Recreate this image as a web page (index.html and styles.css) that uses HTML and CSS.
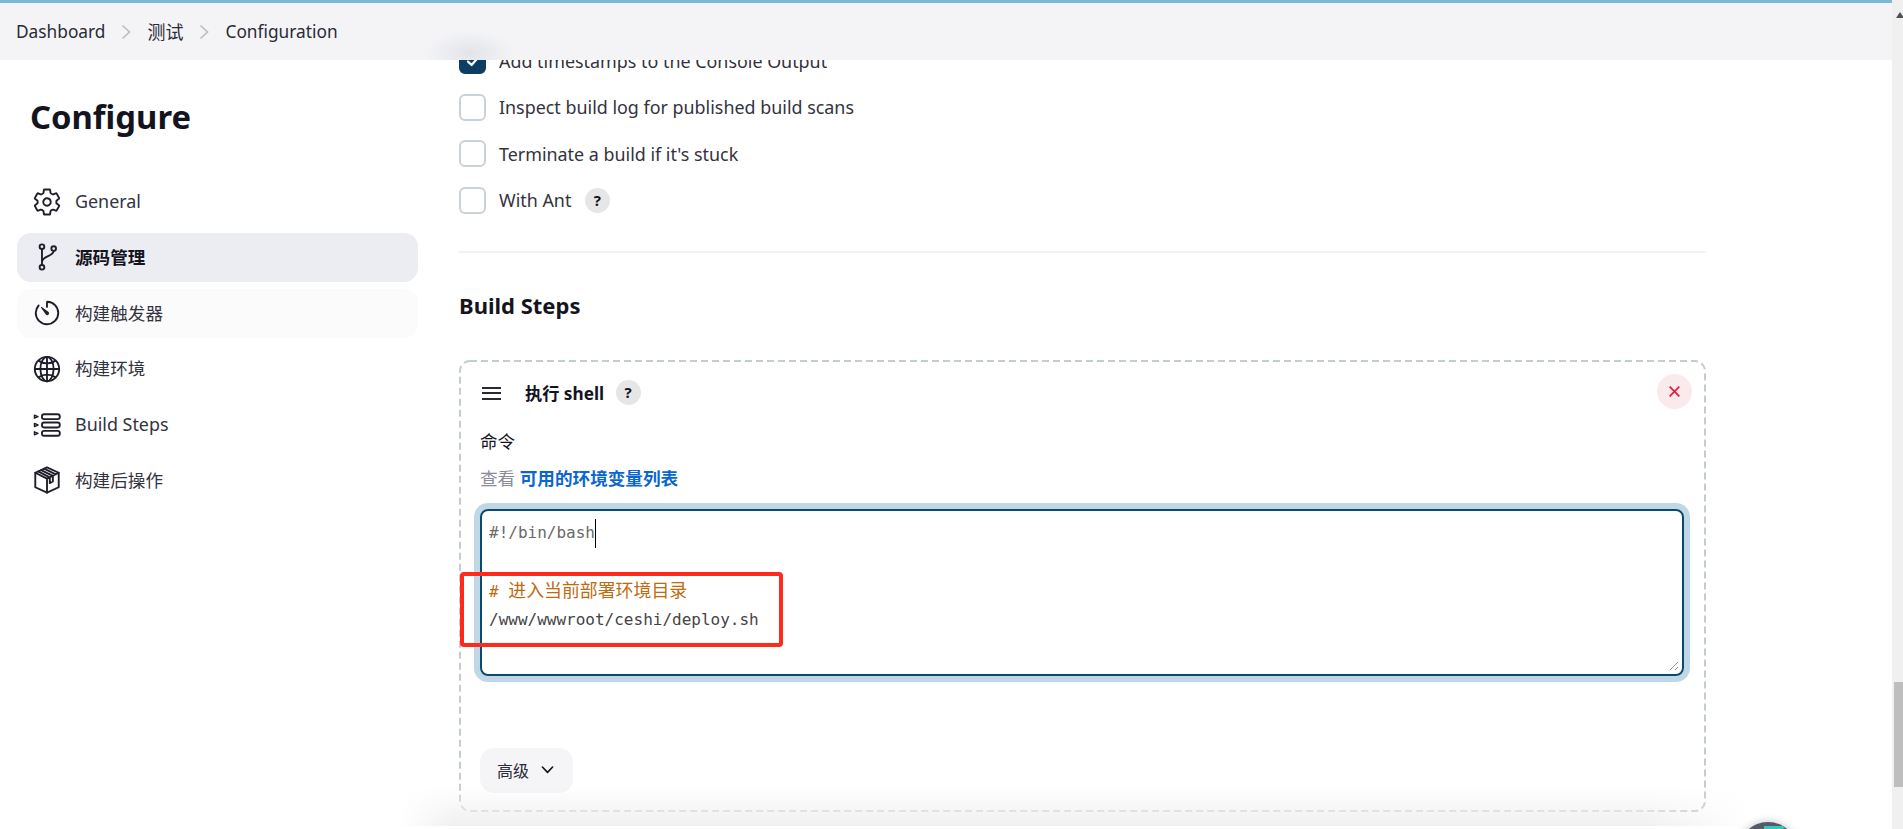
FILE: index.html
```html
<!DOCTYPE html>
<html lang="zh-CN">
<head>
<meta charset="utf-8">
<title>Configuration</title>
<link rel="stylesheet" href="styles.css">
</head>
<body>
<div class="app">
  <div class="page">
    <header class="topbar">
      <nav class="crumbs">
        <a class="crumb">Dashboard</a>
        <svg class="sep" viewBox="0 0 10 16"><path d="M1.5 1.5 8.5 8l-7 6.500"/></svg>
        <a class="crumb cjk">测试</a>
        <svg class="sep" viewBox="0 0 10 16"><path d="M1.5 1.5 8.500 8l-7 6.500"/></svg>
        <a class="crumb">Configuration</a>
      </nav>
    </header>

    <aside class="side">
      <h1 class="title">Configure</h1>
      <ul class="menu">
        <li class="item">
          <svg class="ico" viewBox="0 0 512 512"><path d="M262.29 192.31a64 64 0 1057.4 57.4 64.13 64.13 0 00-57.4-57.4zM416.39 256a154.34 154.34 0 01-1.53 20.79l45.21 35.46a10.81 10.81 0 012.45 13.75l-42.77 74a10.81 10.81 0 01-13.14 4.59l-44.9-18.08a16.11 16.11 0 00-15.17 1.75A164.48 164.48 0 01325 400.8a15.94 15.94 0 00-8.82 12.14l-6.73 47.89a11.08 11.08 0 01-10.68 9.17h-85.54a11.11 11.11 0 01-10.69-8.87l-6.72-47.82a16.07 16.07 0 00-9-12.22 155.3 155.3 0 01-21.46-12.57 16 16 0 00-15.11-1.71l-44.89 18.07a10.81 10.81 0 01-13.14-4.58l-42.77-74a10.8 10.8 0 012.45-13.75l38.21-30a16.05 16.05 0 006-14.08c-.36-4.17-.58-8.33-.58-12.5s.21-8.27.58-12.35a16 16 0 00-6.07-13.94l-38.19-30A10.81 10.81 0 0149.48 186l42.77-74a10.81 10.81 0 0113.14-4.59l44.9 18.08a16.11 16.11 0 0015.17-1.75A164.48 164.48 0 01187 111.2a15.94 15.94 0 008.82-12.14l6.73-47.89A11.08 11.08 0 01213.23 42h85.54a11.11 11.11 0 0110.69 8.87l6.72 47.82a16.07 16.07 0 009 12.22 155.3 155.3 0 0121.46 12.57 16 16 0 0015.11 1.71l44.89-18.07a10.81 10.81 0 0113.14 4.58l42.77 74a10.8 10.8 0 01-2.45 13.75l-38.21 30a16.05 16.05 0 00-6.05 14.08c.33 4.14.55 8.3.55 12.47z"/></svg>
          <span>General</span>
        </li>
        <li class="item active">
          <svg class="ico" viewBox="0 0 512 512"><circle cx="170" cy="80" r="40"/><circle cx="170" cy="432" r="40"/><circle cx="370" cy="112" r="40"/><path d="M170 120v272M370 152c0 90-200 90-200 190"/></svg>
          <span class="cjk">源码管理</span>
        </li>
        <li class="item hover">
          <svg class="ico" viewBox="0 0 512 512"><path d="M112.91 128A191.85 191.85 0 0064 254c-1.18 106.35 85.65 193.8 192 194 106.2.2 192-85.83 192-192 0-104.54-83.55-189.61-187.5-192a4.36 4.36 0 00-4.5 4.37V152"/><path class="solid" d="M233.38 278.63l-79-113a8.13 8.13 0 0111.32-11.32l113 79a32.5 32.5 0 01-37.25 53.26 33.21 33.21 0 01-8.07-8.94z"/></svg>
          <span class="cjk">构建触发器</span>
        </li>
        <li class="item">
          <svg class="ico" viewBox="0 0 512 512"><path d="M256 48C141.13 48 48 141.13 48 256s93.13 208 208 208 208-93.13 208-208S370.87 48 256 48z"/><path d="M256 48c-58.07 0-112.67 93.13-112.67 208S197.93 464 256 464s112.67-93.13 112.67-208S314.07 48 256 48z"/><path d="M117.33 117.33c38.24 27.15 86.38 43.34 138.67 43.34s100.43-16.19 138.67-43.34M394.67 394.67c-38.24-27.15-86.38-43.34-138.67-43.34s-100.43 16.19-138.67 43.34M256 48v416M464 256H48"/></svg>
          <span class="cjk">构建环境</span>
        </li>
        <li class="item">
          <svg class="ico" viewBox="0 0 512 512"><rect x="170" y="72" width="304" height="84" rx="36"/><rect x="170" y="214" width="304" height="84" rx="36"/><rect x="170" y="356" width="304" height="84" rx="36"/><path class="thin" d="M42 88l60 26-60 26zM42 230l60 26-60 26zM42 372l60 26-60 26z"/></svg>
          <span>Build Steps</span>
        </li>
        <li class="item">
          <svg class="ico" viewBox="0 0 512 512"><path d="M256 40 456 132v248L256 472 56 380V132z"/><path d="M56 132l200 100 200-100M256 232v240M156 86l200 100v96l-52 26v-96L104 110M206 63l200 96"/></svg>
          <span class="cjk">构建后操作</span>
        </li>
      </ul>
    </aside>

    <main class="main">
      <div class="checks">
        <label class="check"><span class="box on"><svg viewBox="0 0 16 16"><path d="M3.500 8.500 6.800 11.500 12.500 4.800"/></svg></span><span>Add timestamps to the Console Output</span></label>
        <label class="check"><span class="box"></span><span>Inspect build log for published build scans</span></label>
        <label class="check"><span class="box"></span><span>Terminate a build if it's stuck</span></label>
        <label class="check"><span class="box"></span><span>With Ant</span><span class="help">?</span></label>
      </div>
      <hr class="rule">
      <h2 class="section">Build Steps</h2>
      <section class="card">
        <svg class="dash"><rect x="1" y="1" rx="10" ry="10"/></svg>
        <div class="card-head">
          <span class="handle"><i></i><i></i><i></i></span>
          <span class="card-title">执行 shell</span>
          <span class="help">?</span>
          <button class="close"><svg viewBox="0 0 14 14"><path d="M3 3l8 8M11 3l-8 8"/></svg></button>
        </div>
        <div class="label cjk">命令</div>
        <div class="hint cjk">查看 <a class="link">可用的环境变量列表</a></div>
        <div class="editor">
          <div class="line shebang">#!/bin/bash<span class="caret"></span></div>
          <div class="line">&nbsp;</div>
          <div class="line comment"># <span class="zh">进入当前部署环境目录</span></div>
          <div class="line">/www/wwwroot/ceshi/deploy.sh</div>
          <svg class="grip" viewBox="0 0 10 10"><path d="M1 9 9 1M6 9 9 6"/></svg>
        </div>
        <button class="adv"><span class="cjk">高级</span><svg viewBox="0 0 14 10"><path d="M1.500 1.800 7 7.500l5.500-5.700"/></svg></button>
      </section>
    </main>

    <div class="blur-bottom"></div>
    <div class="fab"><i></i></div>
    <div class="mark"></div>
  </div>
  <div class="scrollbar">
    <svg class="arrow" viewBox="0 0 8 8"><path d="M4 1 8 7H0z"/></svg>
    <div class="thumb"></div>
  </div>
</div>
</body>
</html>
```

FILE: styles.css
```css
* { box-sizing: border-box; }
html, body { margin: 0; height: 100%; overflow: hidden; background: #fff; }
body {
  font-family: "Noto Sans", "Noto Sans CJK SC", sans-serif;
  font-size: 17.900px;
  color: #14141f;
}
.cjk { font-size: 17.600px; }
h1, h2, ul { margin: 0; padding: 0; }
ul { list-style: none; }

.app { display: flex; height: 829px; }
.page { position: relative; flex: 1; display: flex; overflow: hidden; min-width: 0; }

.topbar {
  position: absolute; z-index: 3; left: 0; right: 0; top: 0; height: 60px;
  border-top: 3px solid #7ab9d6;
  background:
    radial-gradient(ellipse 45px 22px at 470px 50px, #e2e4e9 0%, rgba(226,228,233,0) 100%),
    #f4f4f7;
  display: flex; align-items: center; padding: 0 16px;
}
.crumbs { display: flex; align-items: center; font-size: 17.300px; }
.crumb { line-height: 26px; color: #2a2a36; }
.crumb.cjk { font-size: 18px; }
.sep { width: 10px; height: 16px; margin: 0 16px; fill: none; stroke: #bdbdc8; stroke-width: 1.700; }

.side { width: 459px; flex: none; padding: 97px 0 0 17px; }
.title { font-size: 32.800px; line-height: 40px; font-weight: 700; padding-left: 13px; color: #14141f; }
.menu { margin-top: 40px; display: flex; flex-direction: column; gap: 6.750px; width: 401px; }
.item { height: 49px; display: flex; align-items: center; gap: 13px; padding-left: 15px; border-radius: 14px; color: #33333f; }
.item span { margin-top: -2px; }
.item.active { background: #ecedf2; font-weight: 700; color: #14141f; }
.item.hover { background: #fbfbfc; }
.ico { width: 30px; height: 30px; flex: none; fill: none; stroke: #1e1e2a; stroke-width: 32; stroke-linecap: round; stroke-linejoin: round; }
.ico .solid { fill: #1e1e2a; stroke: none; }
.ico .thin { stroke-width: 24; }

.main { width: 1247px; flex: none; padding-top: 47px; }
.checks { display: flex; flex-direction: column; gap: 19.500px; }
.check { display: flex; align-items: center; height: 27px; color: #33333f; }
.box { width: 27px; height: 27px; flex: none; margin-right: 13px; border: 2px solid #c8d2d8; border-radius: 6px; display: flex; align-items: center; justify-content: center; }
.box.on { background: #0c3e63; border-color: #0c3e63; }
.box svg { width: 18px; height: 18px; fill: none; stroke: #fff; stroke-width: 2; stroke-linecap: round; stroke-linejoin: round; }
.help { width: 25px; height: 25px; flex: none; margin-left: 13.500px; border-radius: 50%; background: #e6e6e6; color: #14141f; font-size: 15px; font-weight: 700; line-height: 25px; text-align: center; }

.rule { margin: 37px 0 0; height: 2px; border: 0; background: #f2f2f5; }
.section { margin-top: 37px; margin-bottom: 1px; font-size: 22px; line-height: 30px; font-weight: 700; color: #14141f; }

.card { position: relative; margin-top: 40px; height: 452px; padding: 15px 22px 20px 21px; }
.dash { position: absolute; left: 0; top: 0; width: 100%; height: 100%; fill: none; stroke: #c3ccd1; stroke-width: 2; stroke-dasharray: 7 4; pointer-events: none; }
.dash rect { width: calc(100% - 2px); height: calc(100% - 2px); }
.card-head { display: flex; align-items: center; height: 35px; }
.handle { width: 19px; margin: 2px 24px 0 2px; display: flex; flex-direction: column; gap: 3.500px; }
.handle i { height: 2px; background: #2a2a36; }
.card-title { font-weight: 700; font-size: 17.200px; color: #14141f; }
.card-head .help { margin-left: 11.500px; }
.close { margin: -2px -7.500px 0 auto; width: 35px; height: 35px; padding: 9px; border: 0; border-radius: 50%; background: #fbeaec; }
.close svg { display: block; width: 17px; height: 17px; fill: none; stroke: #e6143c; stroke-width: 1.300; }

.label { margin-top: 17px; line-height: 28px; color: #14141f; }
.hint { margin-top: 9px; line-height: 28px; color: #8a8a9a; }
.link { color: #0a66d0; font-weight: 700; }

.editor {
  position: relative; margin-top: 17px; height: 167px; padding: 7.500px 7px;
  border: 2px solid #0b4a70; border-radius: 8px; box-shadow: 0 0 0 6px #c0d8e6;
  font-family: "DejaVu Sans Mono", "Noto Sans CJK SC", monospace; font-size: 16px; color: #444;
}
.line { height: 29px; line-height: 29px; white-space: pre; }
.shebang { color: #6a6a6a; }
.comment { color: #c06a10; }
.zh { font-size: 17.900px; }
.caret { display: inline-block; width: 1px; height: 29px; background: #000; vertical-align: middle; }
.grip { position: absolute; right: 3px; bottom: 3px; width: 10px; height: 10px; fill: none; stroke: #999; stroke-width: 1; }

.adv {
  display: flex; align-items: center; gap: 12px; margin-top: 72px; width: 93px; height: 45px;
  padding: 0 0 0 17px; border: 0; border-radius: 14px; background: #f5f5f8; color: #2a2a36; font-family: inherit;
}
.adv .cjk { font-size: 16px; }
.adv svg { width: 13px; height: 10px; fill: none; stroke: #14141f; stroke-width: 1.800; stroke-linecap: round; stroke-linejoin: round; }

.blur-bottom {
  position: absolute; left: 400px; width: 1350px; top: 786px; height: 40px;
  background: linear-gradient(to bottom, rgba(240,240,241,0), #f0f0f1);
  -webkit-mask-image: linear-gradient(to right, transparent, #000 4%, #000 92%, transparent);
  mask-image: linear-gradient(to right, transparent, #000 4%, #000 92%, transparent);
  pointer-events: none;
}
.fab {
  position: absolute; left: 1738px; top: 822px; width: 60px; height: 60px;
  border-radius: 50%; background: #565a68; box-shadow: 0 0 8px rgba(0,0,0,.25); overflow: hidden;
}
.fab i { position: absolute; left: 26px; top: 4px; border-left: 22px solid #34c8c0; border-bottom: 22px solid transparent; }
.mark { position: absolute; left: 460px; top: 572px; width: 323px; height: 75px; border: 4px solid #ff2a1a; border-radius: 4px; pointer-events: none; }

.scrollbar { position: relative; width: 11px; flex: none; background: #f0f0f0; padding-top: 11px; display: flex; flex-direction: column; align-items: flex-end; }
.arrow { width: 8px; height: 8px; fill: #505050; margin-right: -1px; }
.thumb { width: 9px; height: 105px; margin-top: 663px; background: #bebebe; }
```
